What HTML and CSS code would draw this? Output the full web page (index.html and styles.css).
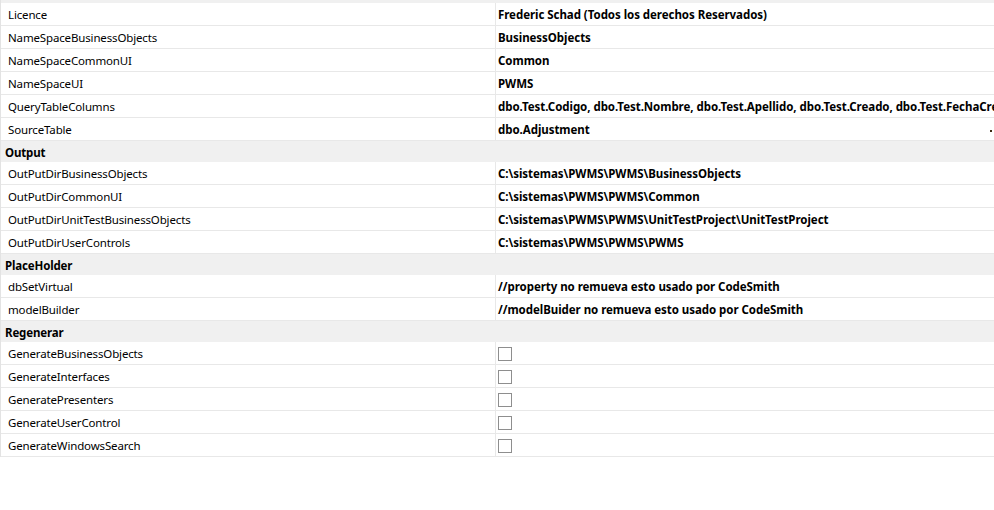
FILE: index.html
```html
<!DOCTYPE html>
<html>
<head>
<meta charset="utf-8">
<link rel="stylesheet" href="styles.css">
</head>
<body>
<div class="grid">
  <div class="topstrip"></div>
  <div class="row"><div class="name">Licence</div><div class="value">Frederic Schad (Todos los derechos Reservados)</div></div>
  <div class="row"><div class="name">NameSpaceBusinessObjects</div><div class="value">BusinessObjects</div></div>
  <div class="row"><div class="name">NameSpaceCommonUI</div><div class="value">Common</div></div>
  <div class="row"><div class="name">NameSpaceUI</div><div class="value">PWMS</div></div>
  <div class="row"><div class="name">QueryTableColumns</div><div class="value">dbo.Test.Codigo, dbo.Test.Nombre, dbo.Test.Apellido, dbo.Test.Creado, dbo.Test.FechaCreacion, dbo.Test.Activo</div></div>
  <div class="row"><div class="name">SourceTable</div><div class="value">dbo.Adjustment<span class="dot"></span></div></div>
  <div class="cat">Output</div>
  <div class="row"><div class="name">OutPutDirBusinessObjects</div><div class="value">C:\sistemas\PWMS\PWMS\BusinessObjects</div></div>
  <div class="row"><div class="name">OutPutDirCommonUI</div><div class="value">C:\sistemas\PWMS\PWMS\Common</div></div>
  <div class="row"><div class="name">OutPutDirUnitTestBusinessObjects</div><div class="value">C:\sistemas\PWMS\PWMS\UnitTestProject\UnitTestProject</div></div>
  <div class="row"><div class="name">OutPutDirUserControls</div><div class="value">C:\sistemas\PWMS\PWMS\PWMS</div></div>
  <div class="cat">PlaceHolder</div>
  <div class="row"><div class="name">dbSetVirtual</div><div class="value">//property no remueva esto usado por CodeSmith</div></div>
  <div class="row"><div class="name">modelBuilder</div><div class="value">//modelBuider no remueva esto usado por CodeSmith</div></div>
  <div class="cat">Regenerar</div>
  <div class="row"><div class="name">GenerateBusinessObjects</div><div class="value"><span class="cb"></span></div></div>
  <div class="row"><div class="name">GenerateInterfaces</div><div class="value"><span class="cb"></span></div></div>
  <div class="row"><div class="name">GeneratePresenters</div><div class="value"><span class="cb"></span></div></div>
  <div class="row"><div class="name">GenerateUserControl</div><div class="value"><span class="cb"></span></div></div>
  <div class="row"><div class="name">GenerateWindowsSearch</div><div class="value"><span class="cb"></span></div></div>
</div>
</body>
</html>
```
FILE: styles.css
```css
html, body {
  margin: 0;
  padding: 0;
  background: #ffffff;
}
body {
  width: 994px;
  height: 510px;
  overflow: hidden;
  font-family: "Noto Sans", "Open Sans", sans-serif;
  font-size: 11.5px;
  letter-spacing: -0.15px;
  color: #000000;
}
.grid {
  display: flex;
  flex-direction: column;
  width: 994px;
  overflow: hidden;
  border-left: 1px solid #e3e3e3;
}
.topstrip {
  height: 3px;
  background: #f0f0f0;
}
.row {
  display: grid;
  grid-template-columns: 494px 1px 1fr;
  height: 22px;
  border-bottom: 1px solid #e8e8e8;
}
.row::before {
  content: "";
  grid-column: 2;
  grid-row: 1;
  background: #e8e8e8;
}
.name {
  grid-column: 1;
  grid-row: 1;
  padding-left: 7px;
  padding-top: 1px;
  line-height: 22px;
  height: 21px;
  white-space: nowrap;
}
.value {
  grid-column: 3;
  grid-row: 1;
  padding-left: 2px;
  padding-top: 1px;
  height: 21px;
  line-height: 22px;
  font-weight: bold;
  letter-spacing: -0.05px;
  white-space: nowrap;
  overflow: hidden;
  position: relative;
  display: flex;
  align-items: center;
}
.cat {
  height: 20px;
  padding-top: 1px;
  line-height: 21px;
  background: #f0f0f0;
  font-weight: bold;
  padding-left: 4px;
}
.cb {
  display: block;
  flex: none;
  width: 12px;
  height: 12px;
  border: 1px solid #8e8e8e;
  background: #ffffff;
}
.dot {
  position: absolute;
  left: 494px;
  top: 12px;
  width: 2px;
  height: 2px;
  background: #3a2a10;
}
```
